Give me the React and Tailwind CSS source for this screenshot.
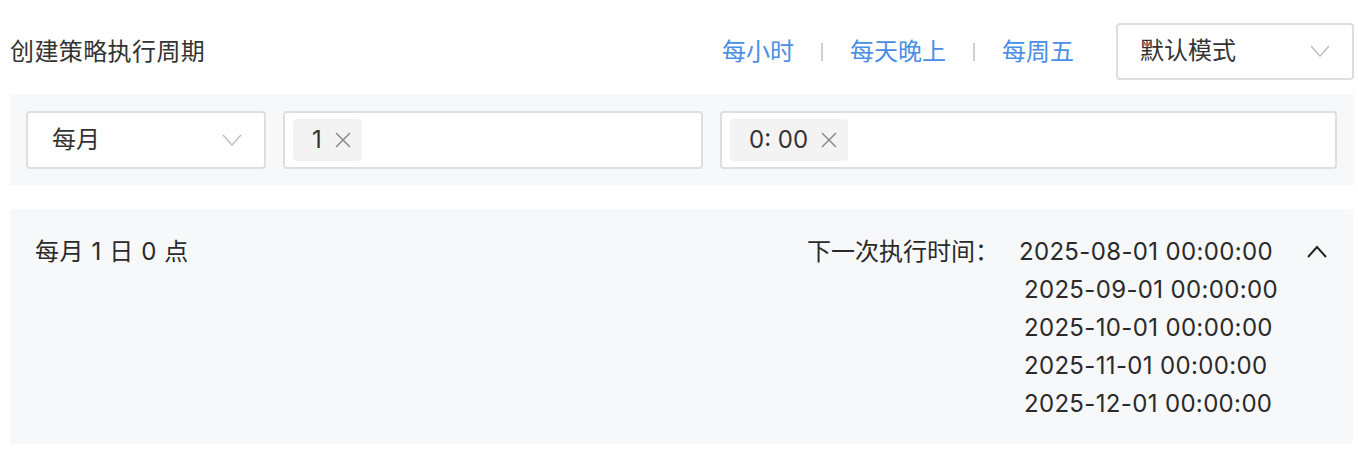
const dates = [
  "2025-08-01 00:00:00",
  "2025-09-01 00:00:00",
  "2025-10-01 00:00:00",
  "2025-11-01 00:00:00",
  "2025-12-01 00:00:00",
];

const ChevronDown = ({ className }) => (
  <svg width="20" height="12" viewBox="0 0 20 12" className={className} fill="none">
    <path d="M1 1 L10 11 L19 1" stroke="currentColor" strokeWidth="1.4" />
  </svg>
);

const Close = () => (
  <svg width="16" height="16" viewBox="0 0 16 16" fill="none" className="ml-[13px] text-[#8a8a8a]">
    <path d="M1 1 L15 15 M15 1 L1 15" stroke="currentColor" strokeWidth="1.5" />
  </svg>
);

const Tag = ({ children }) => (
  <div className="flex items-center h-[42px] pl-[19px] pr-[11px] bg-[#f3f3f4] rounded-[4px]">
    <span className="text-[24px] text-[#333]">{children}</span>
    <Close />
  </div>
);

export default function App() {
  return (
    <div className="w-[1358px] h-[458px] bg-white pl-[10px] pr-[4px] pt-[23px] text-[#333] font-['Inter','Noto_Sans_CJK_SC',sans-serif]">
      {/* header row */}
      <div className="flex items-center h-[56px]">
        <div className="text-[24px] tracking-[0.4px] mt-[1px]">创建策略执行周期</div>
        <div className="ml-auto flex items-center text-[24px] text-[#4a8ee6] mt-[1px]">
          <span>每小时</span>
          <span className="mx-[27px] w-[2px] h-[18px] bg-[#d0d0d0]" />
          <span>每天晚上</span>
          <span className="mx-[27px] w-[2px] h-[18px] bg-[#d0d0d0]" />
          <span>每周五</span>
        </div>
        <div className="ml-[42px] w-[238px] h-[57px] bg-white border-2 border-[#dedede] rounded-[4px] flex items-center pl-[22px] pr-[22px]">
          <span className="text-[24px]">默认模式</span>
          <ChevronDown className="ml-auto text-[#bdbdbd]" />
        </div>
      </div>

      {/* inputs panel */}
      <div className="mt-[15px] h-[91px] bg-[#f7f8fa] flex items-center gap-[17px] pl-[16px] pr-[17px]">
        <div className="w-[240px] h-[58px] bg-white border-2 border-[#dedede] rounded-[4px] flex items-center pl-[24px] pr-[22px]">
          <span className="text-[24px]">每月</span>
          <ChevronDown className="ml-auto text-[#bdbdbd]" />
        </div>
        <div className="w-[420px] h-[58px] bg-white border-2 border-[#dedede] rounded-[4px] flex items-center pl-[8px]">
          <Tag>1</Tag>
        </div>
        <div className="flex-1 h-[58px] bg-white border-2 border-[#dedede] rounded-[4px] flex items-center pl-[8px]">
          <Tag>0: 00</Tag>
        </div>
      </div>

      {/* preview panel */}
      <div className="mt-[24px] h-[235px] mr-[1px] bg-[#f7f8fa] rounded-[4px] flex items-start pt-[24px] pl-[25px] pr-[26px] text-[24px] leading-[38px] text-[#2a2a2a]">
        <div className="tracking-[0.6px]">每月 1 日 0 点</div>
        <div className="ml-auto flex items-start">
          <span>下一次执行时间：</span>
          <div className="ml-[20px] flex flex-col tracking-[0.35px]">
            {dates.map((d, i) => (
              <span key={d} className={i === 0 ? "" : "ml-[5px]"}>{d}</span>
            ))}
          </div>
          <svg width="20" height="13" viewBox="0 0 20 13" fill="none" className="ml-[29px] mt-[12px] text-[#222]">
            <path d="M1 12 L10 2 L19 12" stroke="currentColor" strokeWidth="2" />
          </svg>
        </div>
      </div>
    </div>
  );
}
